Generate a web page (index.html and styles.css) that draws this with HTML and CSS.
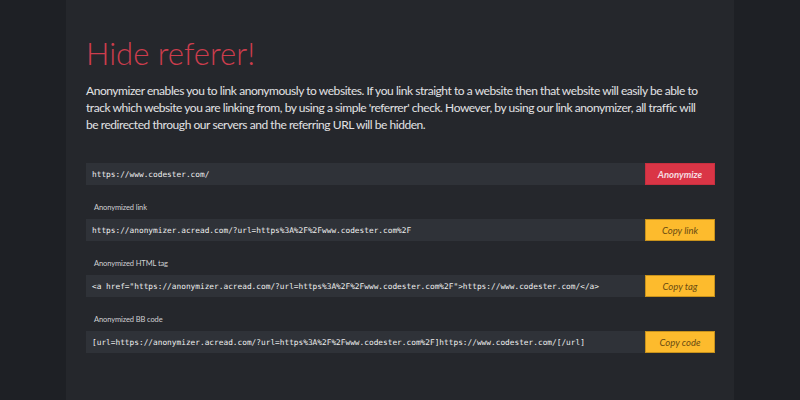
FILE: index.html
```html
<!DOCTYPE html>
<html lang="en">
<head>
<meta charset="utf-8">
<title>Hide referer!</title>
<link rel="stylesheet" href="styles.css">
</head>
<body>
<div class="page">
  <main class="panel">
    <h1 class="title">Hide referer!</h1>
    <p class="intro">Anonymizer enables you to link anonymously to websites. If you link straight to a website then that website will easily be able to<br>track which website you are linking from, by using a simple 'referrer' check. However, by using our link anonymizer, all traffic will<br>be redirected through our servers and the referring URL will be hidden.</p>
    <div class="tool">
      <div class="row">
        <div class="field">https://www.codester.com/</div>
        <button class="btn btn-red">Anonymize</button>
      </div>
      <div class="group">
        <div class="label">Anonymized link</div>
        <div class="row">
          <div class="field">https://anonymizer.acread.com/?url=https%3A%2F%2Fwww.codester.com%2F</div>
          <button class="btn btn-yellow">Copy link</button>
        </div>
      </div>
      <div class="group">
        <div class="label">Anonymized HTML tag</div>
        <div class="row">
          <div class="field">&lt;a href="https://anonymizer.acread.com/?url=https%3A%2F%2Fwww.codester.com%2F"&gt;https://www.codester.com/&lt;/a&gt;</div>
          <button class="btn btn-yellow">Copy tag</button>
        </div>
      </div>
      <div class="group">
        <div class="label">Anonymized BB code</div>
        <div class="row">
          <div class="field">[url=https://anonymizer.acread.com/?url=https%3A%2F%2Fwww.codester.com%2F]https://www.codester.com/[/url]</div>
          <button class="btn btn-yellow">Copy code</button>
        </div>
      </div>
    </div>
  </main>
</div>
</body>
</html>
```

FILE: styles.css
```css
* { box-sizing: border-box; }
html, body { margin: 0; padding: 0; }
body {
  background: #1e2025;
  font-family: "Lato", "Open Sans", sans-serif;
}
.page {
  display: flex;
  justify-content: center;
  height: 400px;
  overflow: hidden;
}
.panel {
  width: 668px;
  height: 400px;
  background: #25272c;
  padding: 35px 19px 0 20px;
}
.title {
  margin: 0;
  font-size: 31px;
  line-height: 37px;
  font-weight: 300;
  color: #cc3d4d;
}
.intro {
  margin: 10px 0 0;
  font-size: 12px;
  line-height: 17px;
  letter-spacing: -0.45px;
  color: #e2e2e4;
  white-space: nowrap;
}
.tool {
  margin-top: 30px;
}
.row {
  display: flex;
  height: 22px;
}
.field {
  flex: 1;
  background: #2f3238;
  color: #eeeeee;
  font-family: "DejaVu Sans Mono", "Liberation Mono", monospace;
  font-size: 7.8px;
  display: flex;
  align-items: center;
  padding-left: 6px;
  white-space: nowrap;
  overflow: hidden;
}
.btn {
  width: 70px;
  height: 22px;
  border: 1px solid transparent;
  margin: 0;
  padding: 0;
  font-family: "Lato", sans-serif;
  font-style: italic;
  font-size: 9.5px;
  display: flex;
  align-items: center;
  justify-content: center;
}
.btn-red {
  background: #da3546;
  border-color: #c82f3f;
  color: #f6dbe0;
  font-weight: 700;
}
.btn-yellow {
  background: #fdbb2d;
  border-color: #c8921c;
  color: #6a4b12;
}
.group {
  margin-top: 17px;
}
.label {
  font-size: 7.5px;
  line-height: 12px;
  letter-spacing: -0.1px;
  color: #cfd0d3;
  padding-left: 8px;
  margin-bottom: 5px;
}
```
